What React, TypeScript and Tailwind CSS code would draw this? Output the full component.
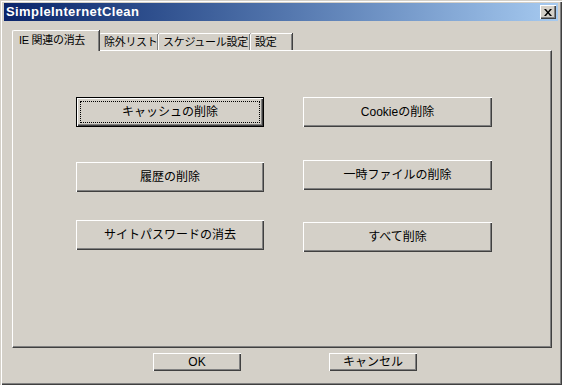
import React from "react";

const FONT = "font-['Liberation_Sans','Noto_Sans_CJK_JP',sans-serif]";

const BEVEL =
  "shadow-[inset_1px_1px_0_#ffffff,inset_-1px_-1px_0_#404040,inset_-2px_-2px_0_#808080]";

function Button({
  label,
  w,
  h,
  focused = false,
}: {
  label: string;
  w: string;
  h: string;
  focused?: boolean;
}) {
  if (focused) {
    return (
      <div className={`${w} ${h} flex border border-black bg-[#d4d0c8]`}>
        <div className={`flex flex-1 ${BEVEL} p-[3px]`}>
          <div className="flex flex-1 items-center justify-center whitespace-nowrap border border-dotted border-black text-[12px] text-black">
            {label}
          </div>
        </div>
      </div>
    );
  }
  return (
    <div
      className={`${w} ${h} flex items-center justify-center whitespace-nowrap bg-[#d4d0c8] ${BEVEL} text-[12px] text-black`}
    >
      {label}
    </div>
  );
}

function Tab({ label, w, active = false }: { label: string; w: string; active?: boolean }) {
  return (
    <div
      className={`${w} ${
        active ? "relative z-10 -mb-px h-[21px] pb-[2px] pl-[6px]" : "h-[17px] pl-[4px]"
      } flex items-center overflow-hidden whitespace-nowrap rounded-tl-[2px] border-l border-t border-white bg-[#d4d0c8] text-[11px] leading-none tracking-[-0.3px] text-black [box-shadow:inset_-1px_0_0_#808080,1px_0_0_#404040]`}
    >
      {label}
    </div>
  );
}

export default function App() {
  return (
    <div
      className={`${FONT} flex h-[385px] w-[562px] flex-col bg-[#d4d0c8] px-[4px] pt-[3px] shadow-[inset_1px_1px_0_#d4d0c8,inset_2px_2px_0_#ffffff,inset_-1px_-1px_0_#404040,inset_-2px_-2px_0_#808080]`}
    >
      {/* title bar */}
      <div className="flex h-[18px] items-center bg-linear-to-r from-[#0a246a] to-[#a6caf0] pl-[2px] pr-[2px]">
        <span className="text-[13px] font-bold tracking-[0.4px] text-white">SimpleInternetClean</span>
        <div
          className={`ml-auto flex h-[14px] w-[16px] items-center justify-center bg-[#d4d0c8] ${BEVEL}`}
        >
          <svg width="8" height="7" viewBox="0 0 8 7">
            <path d="M0 0h2l2 2.5L6 0h2L5 3.5 8 7H6L4 4.5 2 7H0l3-3.5z" fill="#000" />
          </svg>
        </div>
      </div>

      {/* tabs */}
      <div className="ml-[8px] mt-[9px] flex h-[20px] items-end">
        <Tab label="IE 関連の消去" w="w-[87px]" active />
        <Tab label="除外リスト" w="w-[59px]" />
        <Tab label="スケジュール設定" w="w-[92px]" />
        <Tab label="設定" w="w-[42px]" />
      </div>

      {/* panel */}
      <div className="ml-[8px] flex h-[298px] w-[540px] border border-b-[#404040] border-l-white border-r-[#404040] border-t-white shadow-[inset_-1px_-1px_0_#808080]">
        <div className="ml-[63px] mt-[46px] flex flex-col">
          <Button label="キャッシュの削除" w="w-[188px]" h="h-[30px]" focused />
          <div className="mt-[35px]">
            <Button label="履歴の削除" w="w-[188px]" h="h-[30px]" />
          </div>
          <div className="mt-[28px]">
            <Button label="サイトパスワードの消去" w="w-[188px]" h="h-[30px]" />
          </div>
        </div>
        <div className="ml-[39px] mt-[46px] flex flex-col">
          <Button label="Cookieの削除" w="w-[189px]" h="h-[30px]" />
          <div className="mt-[33px]">
            <Button label="一時ファイルの削除" w="w-[189px]" h="h-[30px]" />
          </div>
          <div className="mt-[32px]">
            <Button label="すべて削除" w="w-[189px]" h="h-[30px]" />
          </div>
        </div>
      </div>

      {/* footer */}
      <div className="ml-[149px] mt-[5px] flex gap-[88px]">
        <Button label="OK" w="w-[88px]" h="h-[18px]" />
        <Button label="キャンセル" w="w-[88px]" h="h-[18px]" />
      </div>
    </div>
  );
}
